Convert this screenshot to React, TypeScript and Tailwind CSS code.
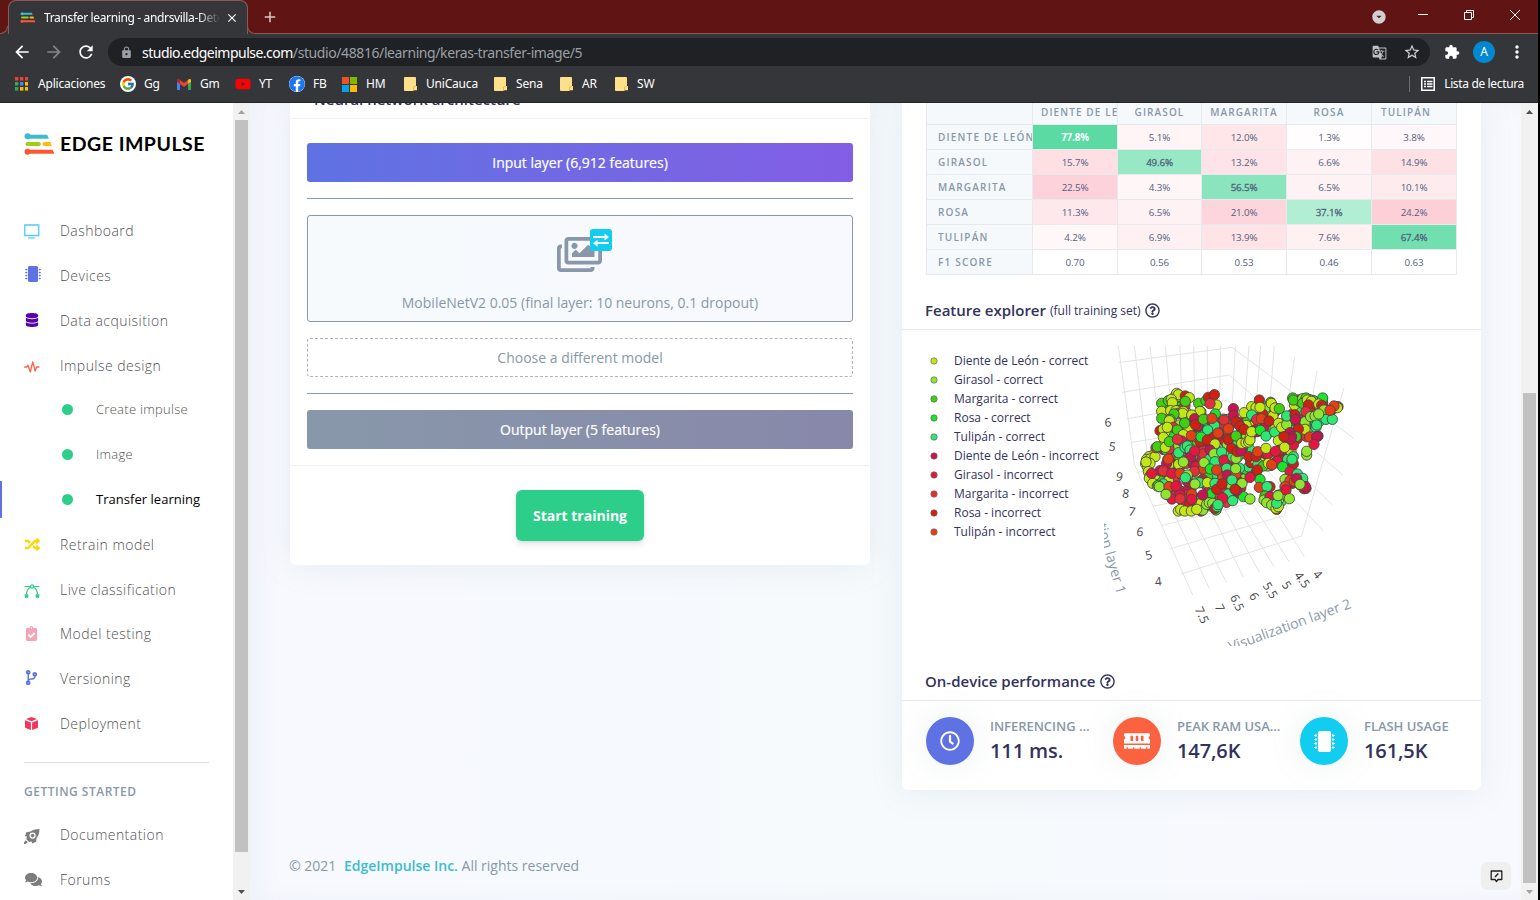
import type { ReactNode } from "react";
import {
  MdArrowBack, MdArrowForward, MdRefresh, MdLock, MdGTranslate, MdStarBorder,
  MdExtension, MdMoreVert, MdArrowDropDownCircle, MdClose, MdAdd,
} from "react-icons/md";
import { FcGoogle } from "react-icons/fc";
import {
  FaYoutube, FaFacebook, FaDatabase, FaMicrochip, FaRandom, FaClipboardCheck, FaCodeBranch,
  FaComments, FaRegImages, FaRegClock, FaMemory, FaRegQuestionCircle,
} from "react-icons/fa";

/* ---------- browser chrome ---------- */

function EdgeMark({ className }: { className: string }) {
  return (
    <svg className={className} viewBox="0 0 90 66">
      <circle cx="9" cy="10" r="9" fill="#3bbcd0" />
      <path d="M9 5h59l5 12H9z" fill="#3bbcd0" />
      <rect x="3" y="27" width="46" height="12" rx="6" fill="#a5cc14" />
      <path d="M60 27h17l5 12H60a6 6 0 0 1 0-12z" fill="#fdb813" />
      <circle cx="9" cy="56" r="9" fill="#ff5630" />
      <path d="M9 50h75l6 12H9z" fill="#ff5630" />
    </svg>
  );
}

function AppsGrid() {
  const colors = ["#ea4335", "#ea4335", "#ea4335", "#34a853", "#4285f4", "#fbbc05", "#34a853", "#fbbc05", "#fbbc05"];
  return (
    <svg width="13" height="14" viewBox="0 0 13 14">
      {colors.map((c, i) => (
        <rect key={i} x={(i % 3) * 5} y={Math.floor(i / 3) * 5} width="3.4" height="3.6" fill={c} />
      ))}
    </svg>
  );
}

function Folder() {
  return (
    <svg width="13" height="14" viewBox="0 0 13 14">
      <path d="M1 0h10a1 1 0 0 1 1 1v8h1v4.2H9.5V14H1a1 1 0 0 1-1-1V1a1 1 0 0 1 1-1z" fill="#ffe08a" />
      <path d="M9.5 13.5V10l2.5-1" stroke="#e0b24a" fill="none" strokeWidth=".8" />
    </svg>
  );
}

function Gmail() {
  return (
    <svg width="14" height="11" viewBox="0 0 14 11">
      <path d="M0 2v8a1 1 0 0 0 1 1h2V4z" fill="#4285f4" />
      <path d="M14 2v8a1 1 0 0 1-1 1h-2V4z" fill="#34a853" />
      <path d="M11 4.5V1l1-.7c.9-.6 2 0 2 1.1V3z" fill="#fbbc04" />
      <path d="M3 5V1l4 3 4-3v4L7 8z" fill="#ea4335" />
      <path d="M0 3V1.400C0 .3 1.100-.3 2 .3L3 1v4z" fill="#c5221f" />
    </svg>
  );
}

function Windows() {
  return (
    <svg width="15" height="15" viewBox="0 0 15 15">
      <path d="M0 0h7v7H0z" fill="#f25022" />
      <path d="M8 0h7v7H8z" fill="#7fba00" />
      <path d="M0 8h7v7H0z" fill="#00a4ef" />
      <path d="M8 8h7v7H8z" fill="#ffb900" />
    </svg>
  );
}

function Bookmark({ icon, label, className }: { icon: ReactNode; label: string; className: string }) {
  return (
    <div className={`flex shrink-0 items-center whitespace-nowrap ${className}`}>
      <span className="flex w-4 shrink-0 justify-center">{icon}</span>
      {label}
    </div>
  );
}

function Chrome() {
  return (
    <header className="flex h-[103px] shrink-0 flex-col border-b border-[#242424] bg-[#35363a] font-['Noto_Sans','Open_Sans',sans-serif] text-[12px] text-white">
      <div className="flex h-[34px] shrink-0 items-end bg-[#611414]">
        <div className="h-2 w-2 bg-[#35363a]">
          <div className="h-2 w-2 rounded-br-lg border-r border-b border-[#8e5858] bg-[#611414]" />
        </div>
        <div className="flex h-[34px] w-[240px] items-center rounded-t-lg border-x border-t border-[#8e5858] bg-[#35363a] pl-[11px]">
          <EdgeMark className="h-[11px] w-4" />
          <div className="ml-2 w-[177px] overflow-hidden whitespace-nowrap tracking-[-0.35px] [mask-image:linear-gradient(to_right,black_154px,transparent_176px)]">
            Transfer learning - andrsvilla-Detección
          </div>
          <MdClose className="ml-[4px] size-[14px]" />
        </div>
        <div className="relative h-[34px] flex-1">
          <div className="flex h-[34px] items-center border-b border-[#8e5858] pl-[13px]">
            <MdAdd className="size-[18px] text-[#dcc8c8]" />
            <div className="flex-1" />
            <MdArrowDropDownCircle className="mt-px mr-[31px] size-4 text-[#d0d0d3]" />
            <span className="mr-[36px] mb-[4px] h-px w-[10px] bg-white" />
            <svg className="mr-[36px] mb-[4px]" width="10" height="10" viewBox="0 0 10 10" fill="none" stroke="white">
              <path d="M.5 2.500h7v7h-7zM2.500 2.500v-2h7v7h-2" />
            </svg>
            <svg className="mr-[18px] mb-[4px]" width="10" height="10" viewBox="0 0 10 10" stroke="white">
              <path d="M0 0l10 10M10 0L0 10" />
            </svg>
          </div>
          <div className="absolute bottom-0 left-0 h-2 w-2 bg-[#35363a]">
            <div className="-ml-px h-2 w-[9px] rounded-bl-lg border-b border-l border-[#8e5858] bg-[#611414]" />
          </div>
        </div>
      </div>
      <div className="flex h-[36px] shrink-0 items-center pl-3">
        <MdArrowBack className="size-5" />
        <MdArrowForward className="ml-3 size-5 text-[#858689]" />
        <MdRefresh className="ml-3 size-5" />
        <div className="ml-3 flex h-7 w-[1322px] items-center rounded-full bg-[#202124] pl-[12px] text-[14px]">
          <MdLock className="size-[13px] text-[#9aa0a6]" />
          <span className="ml-[9px] tracking-[-0.51px]">studio.edgeimpulse.com</span>
          <span className="tracking-[-0.41px] text-[#9aa0a6]">/studio/48816/learning/keras-transfer-image/5</span>
          <div className="flex-1" />
          <MdGTranslate className="size-[15px] text-[#c0c1c4]" />
          <MdStarBorder className="mr-[9px] ml-4 size-[18px] text-[#d0d1d4]" />
        </div>
        <MdExtension className="ml-[14px] size-4" />
        <div className="ml-[13px] flex size-[22px] items-center justify-center rounded-full bg-[#0288d1] text-[12px]">A</div>
        <MdMoreVert className="ml-3 size-5" />
      </div>
      <div className="flex h-[28px] shrink-0 items-center tracking-[-0.2px]">
        <Bookmark className="w-[106px] gap-[9px] pl-[13px]" icon={<AppsGrid />} label="Aplicaciones" />
        <Bookmark className="w-[56px] gap-[8px] pl-[14px]" icon={<span className="flex size-4 shrink-0 items-center justify-center rounded-full bg-white"><FcGoogle className="size-[14px]" /></span>} label="Gg" />
        <Bookmark className="w-[59px] gap-[8px] pl-[14px]" icon={<Gmail />} label="Gm" />
        <Bookmark className="w-[54px] gap-[8px] pl-[14px]" icon={<FaYoutube className="size-4 text-[#ff0000]" />} label="YT" />
        <Bookmark className="w-[53px] gap-[8px] pl-[14px]" icon={<span className="rounded-full bg-white"><FaFacebook className="size-4 text-[#1877f2]" /></span>} label="FB" />
        <Bookmark className="w-[60px] gap-[9px] pl-[13px]" icon={<Windows />} label="HM" />
        <Bookmark className="w-[90px] gap-[8px] pl-[14px]" icon={<Folder />} label="UniCauca" />
        <Bookmark className="w-[66px] gap-[8px] pl-[14px]" icon={<Folder />} label="Sena" />
        <Bookmark className="w-[55px] gap-[8px] pl-[14px]" icon={<Folder />} label="AR" />
        <Bookmark className="w-[60px] gap-[8px] pl-[14px]" icon={<Folder />} label="SW" />
        <div className="flex-1" />
        <span className="mr-[11px] h-4 w-px bg-[#6b6c70]" />
        <svg className="mr-[9px]" width="14" height="14" viewBox="0 0 14 14" fill="none" stroke="white">
          <path d="M.75.75h12.500v12.500H.75z" strokeWidth="1.500" />
          <path d="M3 4.500h2M6 4.500h5.500M3 7h2M6 7h5.500M3 9.500h2M6 9.500h5.500" strokeWidth="1.300" />
        </svg>
        <span className="mr-[14px] tracking-[-0.35px]">Lista de lectura</span>
      </div>
    </header>
  );
}

/* ---------- sidebar ---------- */

function Screen() {
  return (
    <svg className="mt-[2px]" width="16" height="15" viewBox="0 0 16 15" fill="none" stroke="#4fcdf5">
      <path d="M.75 1h14v10.500h-14z" strokeWidth="1.300" />
      <path d="M4 14h7" strokeWidth="1.200" />
    </svg>
  );
}

function Pulse() {
  return (
    <svg className="mt-[3px]" width="16" height="12" viewBox="0 0 16 12" fill="none" stroke="#fb6340" strokeWidth="1.300" strokeLinejoin="round" strokeLinecap="round">
      <path d="M.7 6h2l1.300-1.700 2.300 6.700 2.400-10 2.500 9 1.400-4h2.300" />
    </svg>
  );
}

function Vector() {
  return (
    <svg className="mt-[3px]" width="16" height="14" viewBox="0 0 16 14" fill="#2dce89" stroke="#2dce89">
      <circle cx="8" cy="2.500" r="1.600" fill="white" strokeWidth="1.200" />
      <path d="M1 2.500h5M10 2.500h5M6.500 3.200C4 4.500 2.800 7 2.500 10M9.500 3.200c2.500 1.300 3.700 3.800 4 6.800" fill="none" strokeWidth="1.200" />
      <circle cx="1.300" cy="2.500" r=".8" stroke="none" />
      <circle cx="14.700" cy="2.500" r=".8" stroke="none" />
      <rect x="1" y="10.500" width="3" height="3" strokeWidth=".6" />
      <rect x="12" y="10.500" width="3" height="3" strokeWidth=".6" />
    </svg>
  );
}

function Box() {
  return (
    <svg className="mt-px ml-px" width="13" height="13" viewBox="0 0 13 13" fill="#f5365c">
      <path d="M6.500 0L12 2.100 6.500 4.300 1 2.100z" />
      <path d="M0 3.200l5.900 2.200V13L.6 11a.8.8 0 0 1-.6-.8z" />
      <path d="M13 3.200L7.100 5.400V13l5.300-2a.8.8 0 0 0 .6-.8z" />
    </svg>
  );
}

function Spaceship() {
  return (
    <svg className="mt-[3px]" width="16" height="15" viewBox="0 0 16 15" fill="#7d7d7d">
      <path d="M15.500 0C11 .2 8.500 1 6.500 2.600L2.300 3.200 1 7.300l2 .3-.7 2.700 2.800 2.600 2.500-.5.600 2.200 4-1.800.4-4C14.500 7 15.300 4.500 15.500 0z" />
      <circle cx="8.600" cy="6.600" r="3.100" fill="white" />
      <circle cx="8.600" cy="6.600" r="1.800" />
      <path d="M1.800 11.200l2 2L1.500 15H0v-1.700z" />
    </svg>
  );
}

function NavItem({ icon, label }: { icon: ReactNode; label: string }) {
  return (
    <div className="flex h-[44.8px] shrink-0 items-center pl-6 text-[14px] font-light tracking-[0.47px] text-[#525252]">
      <span className="flex w-9 shrink-0 items-center">{icon}</span>
      {label}
    </div>
  );
}

function SubItem({ label, active }: { label: string; active?: boolean }) {
  return (
    <div className="flex h-[44.8px] shrink-0 items-center">
      <span className={active ? "h-[37px] w-[2px] bg-[#5e72e4]" : "h-[37px] w-[2px]"} />
      <span className="ml-[60px] size-[11px] rounded-full bg-[#2dce89]" />
      <span className={active ? "ml-[23px] text-[13px] tracking-[0.03px] text-black" : "ml-[23px] text-[13px] font-light tracking-[0.28px] text-[#525252]"}>
        {label}
      </span>
    </div>
  );
}

function Sidebar() {
  return (
    <aside className="flex w-[233px] shrink-0 flex-col overflow-hidden bg-white">
      <div className="mt-[30px] flex h-[22px] shrink-0 items-center pl-6">
        <EdgeMark className="h-[22px] w-[31px]" />
        <span className="ml-[5px] font-['Lato',sans-serif] text-[19.500px] leading-[22px] font-bold tracking-[0.5px] whitespace-nowrap text-black">
          EDGE IMPULSE
        </span>
      </div>
      <nav className="mt-[53.300px] flex flex-col">
        <NavItem icon={<Screen />} label="Dashboard" />
        <NavItem icon={<FaMicrochip className="mb-[2px] ml-px size-[16px] text-[#5e72e4]" />} label="Devices" />
        <NavItem icon={<FaDatabase className="mb-px ml-px size-[14px] text-[#5603ad]" />} label="Data acquisition" />
        <NavItem icon={<Pulse />} label="Impulse design" />
        <SubItem label="Create impulse" />
        <SubItem label="Image" />
        <SubItem label="Transfer learning" active />
        <NavItem icon={<FaRandom className="ml-px size-[15px] text-[#ffd600]" />} label="Retrain model" />
        <NavItem icon={<Vector />} label="Live classification" />
        <NavItem icon={<FaClipboardCheck className="size-[15px] text-[#f3a4b5]" />} label="Model testing" />
        <NavItem icon={<FaCodeBranch className="mb-[2px] size-[15px] text-[#5e72e4]" />} label="Versioning" />
        <NavItem icon={<Box />} label="Deployment" />
      </nav>
      <div className="mt-[15.700px] ml-6 h-px w-[185px] shrink-0 bg-[#e0e0e0]" />
      <div className="mt-[20px] h-[18px] shrink-0 pl-6 text-[12px] leading-[18px] font-semibold tracking-[0.5px] text-[#8898aa]">GETTING STARTED</div>
      <div className="mt-[12px] flex flex-col">
        <NavItem icon={<Spaceship />} label="Documentation" />
        <NavItem icon={<FaComments className="ml-px size-[17px] text-[#7d7d7d]" />} label="Forums" />
      </div>
    </aside>
  );
}

/* ---------- cards ---------- */

function ArchitectureCard() {
  return (
    <section className="flex h-[462px] w-[580px] flex-col rounded-b-md bg-white text-[14px] shadow-[0_0_32px_rgba(136,152,170,0.15)]">
      <h4 className="h-[15px] shrink-0 overflow-hidden pl-6 text-[15px] font-semibold text-[#32325d]">
        <span className="-mt-[15px] block leading-[22px]">Neural network architecture</span>
      </h4>
      <div className="h-px shrink-0 bg-[#eef0f2]" />
      <div className="mx-[17px] mt-[24px] flex flex-col">
        <div className="flex h-[39px] items-center justify-center rounded-[3px] bg-linear-to-r from-[#5e72e4] to-[#825ee4] pb-px text-white [-webkit-text-stroke:0.2px_white]">Input layer (6,912 features)</div>
        <div className="mt-[16px] h-px bg-[#8898aa]" />
        <div className="mt-[16px] flex h-[107px] flex-col items-center rounded-[3px] border border-[#8898aa] bg-linear-to-r from-[#f6fafd] to-[#f8f9fe]">
          <div className="relative mt-[14px] h-[46px] w-[48px]">
            <FaRegImages className="mt-[2px] ml-px size-[45px] text-[#8898aa]" />
            <span className="absolute top-[-1px] left-[34px] flex h-[22px] w-[22px] items-center justify-center rounded-[3px] bg-[#11cdef]">
              <svg width="18" height="14" viewBox="0 0 18 14" fill="white">
                <path d="M1 3h11.500V.5L17 4l-4.500 3.500V5H1zM17 9H5.500V6.700L1 10.200l4.500 3.500V11H17z" />
              </svg>
            </span>
          </div>
          <div className="mt-[17px] leading-[20px] text-[#8898aa]">MobileNetV2 0.05 (final layer: 10 neurons, 0.1 dropout)</div>
        </div>
        <div className="mt-[16px] flex h-[39px] items-center justify-center rounded-[3px] border border-dashed border-[#adb5bd] pb-px text-[#8898aa]">Choose a different model</div>
        <div className="mt-[16px] h-px bg-[#8898aa]" />
        <div className="mt-[16px] flex h-[39px] items-center justify-center rounded-[3px] bg-linear-to-r from-[#8898aa] to-[#8888aa] text-white [-webkit-text-stroke:0.2px_white]">Output layer (5 features)</div>
      </div>
      <div className="mt-[16px] h-px shrink-0 bg-[#eef0f2]" />
      <div className="mt-[24px] flex justify-center">
        <button className="h-[51px] w-[128px] rounded-md bg-[#2dce89] text-[14px] font-bold text-white shadow-[0_4px_6px_rgba(50,50,93,0.11),0_1px_3px_rgba(0,0,0,0.08)]">
          Start training
        </button>
      </div>
    </section>
  );
}

const COLUMNS = ["DIENTE DE LEÓN", "GIRASOL", "MARGARITA", "ROSA", "TULIPÁN"];
const MATRIX: { name: string; cells: [string, string][] }[] = [
  { name: "DIENTE DE LEÓN", cells: [["77.8%", "bg-[#5cdaa4] text-white font-bold"], ["5.1%", "bg-[#fff5f6]"], ["12.0%", "bg-[#fee6e9]"], ["1.3%", "bg-[#fffdfd]"], ["3.8%", "bg-[#fff7f9]"]] },
  { name: "GIRASOL", cells: [["15.7%", "bg-[#fedfe4]"], ["49.6%", "bg-[#98e8c5] [-webkit-text-stroke:0.3px_#525f7f]"], ["13.2%", "bg-[#fee4e8]"], ["6.6%", "bg-[#fff2f4]"], ["14.9%", "bg-[#fee1e5]"]] },
  { name: "MARGARITA", cells: [["22.5%", "bg-[#fdd2da]"], ["4.3%", "bg-[#fff6f8]"], ["56.5%", "bg-[#8ae4bd] [-webkit-text-stroke:0.3px_#525f7f]"], ["6.5%", "bg-[#fff2f4]"], ["10.1%", "bg-[#feebed]"]] },
  { name: "ROSA", cells: [["11.3%", "bg-[#fee8eb]"], ["6.5%", "bg-[#fff2f4]"], ["21.0%", "bg-[#fdd5dc]"], ["37.1%", "bg-[#b1eed3] [-webkit-text-stroke:0.3px_#525f7f]"], ["24.2%", "bg-[#fdcfd7]"]] },
  { name: "TULIPÁN", cells: [["4.2%", "bg-[#fff7f8]"], ["6.9%", "bg-[#fff1f3]"], ["13.9%", "bg-[#fee3e7]"], ["7.6%", "bg-[#fff0f2]"], ["67.4%", "bg-[#72dfb0] [-webkit-text-stroke:0.3px_#525f7f]"]] },
  { name: "F1 SCORE", cells: [["0.70", ""], ["0.56", ""], ["0.53", ""], ["0.46", ""], ["0.63", ""]] },
];

function ConfusionMatrix() {
  return (
    <div className="ml-[24px] w-[531px] border-r border-b border-[#e6eaee] text-[10px]">
      <div className="grid h-[21px] grid-cols-[106px_85px_84px_85px_85px_85px] font-semibold tracking-[1.1px] text-[#8898aa]">
        <div className="border-l border-[#e6eaee] bg-[#f6f9fc]" />
        {COLUMNS.map((c, i) => (
          <div key={c} className={`overflow-hidden border-l border-[#e6eaee] bg-[#f6f9fc] pb-[3px] text-center leading-[19px] whitespace-nowrap ${i === 0 ? "pl-2 text-left" : ""} ${i === 4 ? "pr-4" : ""}`}>{c}</div>
        ))}
      </div>
      {MATRIX.map((row) => (
        <div key={row.name} className="grid h-[25px] grid-cols-[106px_85px_84px_85px_85px_85px] text-center leading-[25px] text-[#525f7f]">
          <div className="overflow-hidden border-t border-l border-[#e6eaee] bg-[#f6f9fc] pl-[11px] text-left font-semibold tracking-[1.2px] whitespace-nowrap text-[#8898aa]">{row.name}</div>
          {row.cells.map(([v, cls], i) => (
            <div key={i} className={`h-[25px] border-t border-l border-[#e6eaee] text-[9.800px] tracking-[-0.15px] ${cls}`}>{v}</div>
          ))}
        </div>
      ))}
    </div>
  );
}

/* ---------- feature explorer ---------- */

const PALETTE: Record<string, string> = {
  Y: "#c3e616", G: "#8fe62e", M: "#3fd013", R: "#17e629", T: "#2ee874",
  d: "#c8144f", g: "#e6173f", m: "#e62e3a", r: "#cf2013", t: "#e63e17",
};

const LEGEND: [string, string][] = [
  ["Y", "Diente de León - correct"], ["G", "Girasol - correct"], ["M", "Margarita - correct"],
  ["R", "Rosa - correct"], ["T", "Tulipán - correct"], ["d", "Diente de León - incorrect"],
  ["g", "Girasol - incorrect"], ["m", "Margarita - incorrect"], ["r", "Rosa - incorrect"],
  ["t", "Tulipán - incorrect"],
];

/* Points in front, drawn last: class, x, y. */
const FRONT = `
Y 160 345,Y 147 350,Y 140 358,Y 150 357,Y 165 350,Y 137 372,Y 143 382,Y 150 370,Y 138 366,Y 145 395,Y 150 408,Y 155 422,Y 148 415,Y 165 405,Y 158 430,Y 172 438,
M 228 165,Y 230 160,Y 235 164,r 256 168,M 185 190,M 205 182,Y 214 178,Y 268 173,M 256 184,M 296 190,M 318 182,r 325 172,Y 350 195,r 343 164,m 330 191,
Y 185 214,Y 217 188,Y 212 212,Y 228 212,m 235 220,Y 250 214,Y 248 220,M 222 222,Y 300 214,Y 275 225,R 346 222,M 185 235,M 210 238,
Y 208 242,M 254 249,d 284 236,r 286 254,M 310 238,t 336 235,m 372 240,d 400 206,d 400 226,r 408 245,Y 432 218,
r 180 272,Y 195 276,Y 190 268,m 220 262,Y 202 262,M 232 270,Y 250 284,t 274 287,T 323 270,r 340 292,t 354 279,t 385 266,r 420 258,r 432 268,
t 168 323,M 172 320,Y 190 292,Y 196 322,M 208 305,g 245 303,m 232 298,T 236 338,T 255 322,T 262 318,r 300 305,R 303 291,r 322 300,Y 345 312,G 382 313,r 385 300,M 408 288,
T 270 330,m 265 355,d 272 350,g 284 333,d 330 330,G 342 341,T 365 336,d 200 370,t 205 357,Y 236 373,G 250 366,G 312 368,T 345 365,g 372 360,T 398 350,G 408 355,
d 180 392,m 190 393,g 155 400,g 215 400,t 240 400,m 283 394,G 262 405,G 285 432,T 256 413,R 331 387,Y 322 428,T 380 385,d 382 405,t 408 402,G 407 386,t 350 390,
T 190 432,R 175 436,G 178 440,t 207 440,g 228 438,g 216 477,G 198 463,d 260 455,m 268 470,m 265 464,d 308 465,T 345 430,r 350 448,G 391 432,T 396 420,G 426 430,r 366 432,
t 275 462,g 240 465,m 240 476,g 275 478,T 385 462,g 368 474,R 430 470,d 410 452,r 405 448,T 398 482,G 450 477,
Y 235 513,Y 242 508,Y 254 513,Y 274 513,r 303 513,G 308 510,Y 290 508,G 320 493,G 328 488,G 338 490,M 348 510,r 345 505,T 352 500,T 354 494,
M 425 330,r 395 325,r 412 335,d 424 332,Y 425 310,Y 438 308,Y 446 306,Y 450 300,Y 455 275,R 481 271,T 498 288,r 447 350,r 468 350,t 473 335,Y 498 325,
Y 455 200,Y 468 203,T 455 225,r 478 180,m 470 238,r 488 222,t 484 236,Y 480 202,r 507 243,M 512 187,Y 514 190,Y 525 204,M 538 206,T 524 276,Y 536 250,Y 545 262,Y 535 302,G 560 254,
M 578 174,M 580 180,G 608 176,M 618 174,M 608 190,Y 622 180,Y 634 184,r 625 195,R 668 174,Y 656 192,r 665 196,m 618 215,G 615 245,T 560 228,r 585 225,d 586 238,G 632 230,
m 620 290,r 714 200,Y 712 203,t 702 198,G 672 210,G 645 228,T 678 238,T 697 238,t 690 211,G 656 222,T 648 262,Y 615 268,d 654 288,t 629 291,r 595 267,M 588 290,
d 570 278,g 580 315,d 575 290,d 572 297,r 552 290,T 650 255,d 650 290,g 642 313,G 620 345,G 620 334,r 540 330,g 526 334,Y 554 322,r 580 372,T 580 350,T 576 358,
M 490 378,Y 505 370,t 515 374,R 548 380,r 468 398,r 472 390,R 480 418,g 450 412,t 478 442,r 510 440,T 501 440,
g 570 395,T 592 402,G 555 418,T 608 415,t 570 422,t 583 424,d 590 415,g 612 446,r 618 445,d 616 440,G 600 433,M 495 468,G 492 480,g 510 470,t 555 440,g 558 450,
G 500 488,G 515 495,r 530 508,Y 528 505,Y 535 500,T 530 490,G 534 467,G 568 476`;

/* Areas the cloud covers, with how many background points each one holds. */
const REGIONS: { n: number; poly: number[][]; mix: string }[] = [
  { n: 45, mix: "YYYYMMMGTmr", poly: [[185, 190], [230, 162], [268, 174], [325, 200], [340, 225], [310, 260], [240, 300], [190, 300], [183, 250]] },
  { n: 230, mix: "YYGMRTTdggmmrrrt", poly: [[190, 290], [300, 240], [360, 240], [410, 225], [440, 250], [470, 270], [465, 350], [440, 400], [425, 455], [395, 480], [340, 505], [250, 505], [215, 470], [170, 430], [185, 370]] },
  { n: 34, mix: "YYYGMTrdr", poly: [[435, 222], [470, 200], [525, 198], [550, 250], [540, 275], [480, 280], [440, 300]] },
  { n: 70, mix: "YGGMRTTdddmrrt", poly: [[575, 182], [620, 175], [665, 182], [705, 205], [690, 235], [650, 260], [635, 270], [600, 300], [560, 300], [550, 260], [570, 220]] },
  { n: 22, mix: "YYGrrgdT", poly: [[555, 290], [580, 305], [580, 365], [550, 375], [480, 380], [460, 355], [480, 340], [545, 330]] },
  { n: 9, mix: "TGdgrm", poly: [[575, 405], [605, 415], [615, 440], [575, 430]] },
  { n: 14, mix: "YGTrMG", poly: [[500, 475], [545, 460], [560, 470], [530, 500], [505, 490]] },
];

function inside(x: number, y: number, poly: number[][]) {
  let hit = false;
  for (let i = 0, j = poly.length - 1; i < poly.length; j = i++) {
    const [xi, yi] = poly[i];
    const [xj, yj] = poly[j];
    if (yi > y !== yj > y && x < ((xj - xi) * (y - yi)) / (yj - yi) + xi) hit = !hit;
  }
  return hit;
}

function buildPoints() {
  let seed = 48816;
  const rnd = () => {
    seed = (seed * 1664525 + 1013904223) % 4294967296;
    return seed / 4294967296;
  };
  const out: { c: string; x: number; y: number }[] = [];
  for (const { n, poly, mix } of REGIONS) {
    const xs = poly.map((p) => p[0]);
    const ys = poly.map((p) => p[1]);
    const x0 = Math.min(...xs), x1 = Math.max(...xs), y0 = Math.min(...ys), y1 = Math.max(...ys);
    let left = n;
    while (left > 0) {
      const x = x0 + rnd() * (x1 - x0);
      const y = y0 + rnd() * (y1 - y0);
      if (!inside(x, y, poly)) continue;
      out.push({ c: mix[Math.floor(rnd() * mix.length)], x, y });
      left--;
    }
  }
  for (const item of FRONT.split(",")) {
    const [c, x, y] = item.trim().split(" ");
    if (c) out.push({ c, x: Number(x), y: Number(y) });
  }
  return out;
}

const POINTS = buildPoints();

const TICKS: [string, number, number, number][] = [
  ["6", 24, 247, -3], ["5", 37, 319, 8], ["9", 58, 410, 10], ["8", 77, 460, 8], ["7", 96, 514, 8],
  ["6", 120, 575, 8], ["5", 146, 645, -12], ["4", 175, 724, -5],
  ["7.5", 306, 825, 66], ["7", 360, 803, 65], ["6.5", 412, 788, 64], ["6", 463, 769, 60],
  ["5.5", 511, 751, 58], ["5", 560, 735, 55], ["4.5", 607, 719, 54], ["4", 653, 703, 50],
];

function Scatter() {
  return (
    <svg className="mt-[15px] shrink-0" width="256" height="301" viewBox="12 15 768 903">
      <g stroke="#e4e4e4" strokeWidth="3" fill="none">
        <path d="M55 18L103 372 278 765M103 18l40 335 186 395M150 18l20 180M196 18l15 160M240 18l5 160M281 18l3 170M322 18v160M362 18l-4 200M406 18l-12 230M447 18l-17 230M482 18l-4 57-10 120M523 18l-15 190M584 50l-26 180M651 93l-20 120M732 143L605 588" />
        <path d="M55 68L396 22 762 296M66 157L388 105 728 405M80 237L382 180 697 495M92 308L380 260 670 573M110 398l270-60M155 500l280-60M183 557L490 480M208 627l344-100 20-60M243 702L605 588" />
        <path d="M380 728L270 515M430 711L330 510M478 697L370 500M523 681L400 480M568 666L450 480M613 650L500 470" />
      </g>
      <g stroke="#444444" strokeWidth="2.600">
        {POINTS.map((p, i) => (
          <circle key={i} cx={p.x} cy={p.y} r="15.500" fill={PALETTE[p.c]} />
        ))}
      </g>
      <g fill="#444444" fontSize="36" textAnchor="middle">
        {TICKS.map(([label, x, y, a]) => (
          <text key={`${x}`} transform={`translate(${x} ${y}) rotate(${a})`} y="13">{label}</text>
        ))}
      </g>
      <g fill="#8898aa" fontSize="42" textAnchor="end">
        <text transform="translate(756 803) rotate(-20)">Visualization layer 2</text>
        <text transform="translate(51 764) rotate(74)">Visualization layer 1</text>
      </g>
    </svg>
  );
}

function Stat({ icon, color, label, value }: { icon: ReactNode; color: string; label: string; value: string }) {
  return (
    <div className="flex w-[187px] shrink-0">
      <div className={`flex size-12 shrink-0 items-center justify-center rounded-full text-white shadow-[0_0_32px_rgba(136,152,170,0.15)] ${color}`}>{icon}</div>
      <div className="ml-4 w-[106px]">
        <div className="text-[13px] leading-[19px] font-semibold tracking-[-0.03px] whitespace-nowrap text-[#8898aa]">{label}</div>
        <div className="text-[20px] leading-[30px] font-semibold tracking-[-0.1px] text-[#32325d]">{value}</div>
      </div>
    </div>
  );
}

function ResultsCard() {
  return (
    <section className="flex h-[687px] w-[579px] flex-col rounded-b-md bg-white shadow-[0_0_32px_rgba(136,152,170,0.15)]">
      <ConfusionMatrix />
      <h4 className="mt-[23px] flex h-[24px] items-center pl-[23px] text-[15px] font-semibold text-[#32325d]">
        Feature explorer
        <span className="mt-[2px] ml-1 text-[12px] font-normal">(full training set)</span>
        <FaRegQuestionCircle className="ml-1 size-[15px]" />
      </h4>
      <div className="mt-[7px] h-px shrink-0 bg-[#e6e9ee]" />
      <div className="flex h-[316px] shrink-0">
        <div className="flex w-[202px] shrink-0 flex-col pt-[21px] pl-[28px]">
          {LEGEND.map(([key, label]) => (
            <div key={label} className="flex h-[19px] shrink-0 items-center text-[12px] whitespace-nowrap text-[#32325d]">
              <svg className="mr-[16px] shrink-0" width="8" height="8" viewBox="0 0 8 8">
                <circle cx="4" cy="4" r="3.200" fill={PALETTE[key]} stroke="#666666" strokeWidth=".7" />
              </svg>
              {label}
            </div>
          ))}
        </div>
        <Scatter />
      </div>
      <h4 className="mt-[23px] flex h-[24px] items-center pl-[23px] text-[15px] font-semibold text-[#32325d]">
        On-device performance
        <FaRegQuestionCircle className="ml-[5px] size-[15px]" />
      </h4>
      <div className="mt-[7px] h-px shrink-0 bg-[#e6e9ee]" />
      <div className="mt-4 flex pl-6">
        <Stat icon={<FaRegClock className="size-5" />} color="bg-[#5e72e4]" label="INFERENCING ..." value="111 ms." />
        <Stat icon={<FaMemory className="size-[26px]" />} color="bg-[#fb6340]" label="PEAK RAM USA..." value="147,6K" />
        <Stat icon={<FaMicrochip className="size-[21px]" />} color="bg-[#11cdef]" label="FLASH USAGE" value="161,5K" />
      </div>
    </section>
  );
}

/* ---------- page ---------- */

function Arrow({ up, color }: { up?: boolean; color: string }) {
  return (
    <svg className="shrink-0" width="17" height="17" viewBox="0 0 17 17" fill={color}>
      <path d={up ? "M5 11h7L8.500 7z" : "M5 7h7l-3.500 4z"} />
    </svg>
  );
}

export default function App() {
  return (
    <div className="flex h-[900px] w-[1540px] overflow-hidden bg-black font-['Open_Sans',sans-serif]">
      <div className="flex w-[1538px] flex-col">
        <Chrome />
        <div className="flex h-[797px]">
          <Sidebar />
          <div className="flex w-[17px] shrink-0 flex-col items-center bg-[#f1f1f1]">
            <Arrow up color="#a3a3a3" />
            <div className="h-[732px] w-[13px] bg-[#c1c1c1]" />
            <div className="flex-1" />
            <Arrow color="#505050" />
          </div>
          <main className="flex w-[1271px] shrink-0 flex-col overflow-hidden bg-linear-to-r from-[#f7f9fe] via-[#f6fafd] to-[#f8f9fe] shadow-[inset_12px_0_20px_rgba(136,136,190,0.06)]">
            <div className="flex h-[687px] shrink-0 items-start gap-8 pl-[40px]">
              <ArchitectureCard />
              <ResultsCard />
            </div>
            <div className="flex flex-1 items-start justify-between pr-[10px] pl-[39px]">
              <p className="mt-[65px] text-[14px] leading-[22px] text-[#8898aa]">
                © 2021 <span className="ml-1 font-semibold text-[#3bbcd0]">EdgeImpulse Inc.</span> All rights reserved
              </p>
              <button className="mt-[72px] flex h-[28px] w-[30px] items-center justify-center rounded-md bg-[#efefef]">
                <svg width="13" height="13" viewBox="0 0 13 13" fill="none" stroke="#222222">
                  <path d="M1.200 1h10.600v8.500H8L6.500 11.500 5 9.500H1.200z" strokeWidth="1.300" strokeLinejoin="round" />
                  <path d="M5 7l3.300-3.500" strokeWidth="1.500" />
                </svg>
              </button>
            </div>
          </main>
          <div className="flex w-[17px] shrink-0 flex-col items-center bg-[#f1f1f1]">
            <Arrow up color="#505050" />
            <div className="mt-[273px] h-[490px] w-[13px] bg-[#c1c1c1]" />
            <div className="flex-1" />
            <Arrow color="#a3a3a3" />
          </div>
        </div>
      </div>
    </div>
  );
}
